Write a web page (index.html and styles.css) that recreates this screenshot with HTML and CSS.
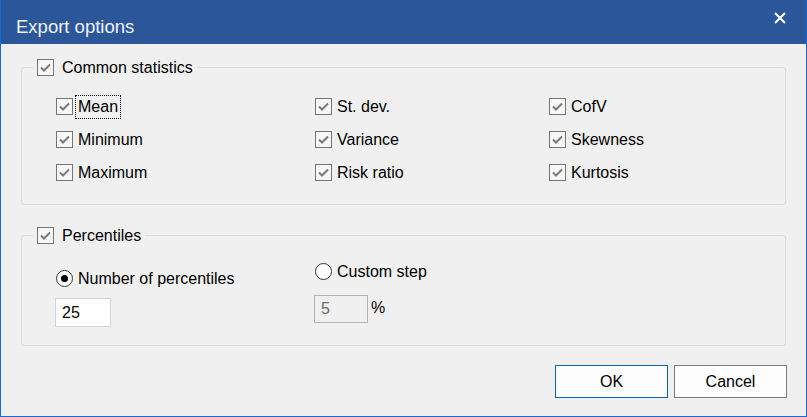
FILE: index.html
```html
<!DOCTYPE html>
<html>
<head>
<meta charset="utf-8">
<link rel="stylesheet" href="styles.css">
</head>
<body>
<div class="window">
  <div class="titlebar">
    <span class="title">Export options</span>
    <svg class="close" width="12" height="12" viewBox="0 0 12 12"><path d="M1 1 L11 11 M11 1 L1 11" stroke="#ffffff" stroke-width="2" fill="none"/></svg>
  </div>
  <div class="content">
    <fieldset class="group group-stats">
      <legend class="legend">
        <span class="cb"><svg viewBox="0 0 15 15"><polyline points="3,7.5 6,10.5 12,4.5"/></svg></span>
        <span class="legend-text">Common statistics</span>
      </legend>
      <div class="grid">
        <div class="item"><span class="cb"><svg viewBox="0 0 15 15"><polyline points="3,7.5 6,10.5 12,4.5"/></svg></span><span class="lbl focus">Mean</span></div>
        <div class="item"><span class="cb"><svg viewBox="0 0 15 15"><polyline points="3,7.5 6,10.5 12,4.5"/></svg></span><span class="lbl">St. dev.</span></div>
        <div class="item"><span class="cb"><svg viewBox="0 0 15 15"><polyline points="3,7.5 6,10.5 12,4.5"/></svg></span><span class="lbl">CofV</span></div>
        <div class="item"><span class="cb"><svg viewBox="0 0 15 15"><polyline points="3,7.5 6,10.5 12,4.5"/></svg></span><span class="lbl">Minimum</span></div>
        <div class="item"><span class="cb"><svg viewBox="0 0 15 15"><polyline points="3,7.5 6,10.5 12,4.5"/></svg></span><span class="lbl">Variance</span></div>
        <div class="item"><span class="cb"><svg viewBox="0 0 15 15"><polyline points="3,7.5 6,10.5 12,4.5"/></svg></span><span class="lbl">Skewness</span></div>
        <div class="item"><span class="cb"><svg viewBox="0 0 15 15"><polyline points="3,7.5 6,10.5 12,4.5"/></svg></span><span class="lbl">Maximum</span></div>
        <div class="item"><span class="cb"><svg viewBox="0 0 15 15"><polyline points="3,7.5 6,10.5 12,4.5"/></svg></span><span class="lbl">Risk ratio</span></div>
        <div class="item"><span class="cb"><svg viewBox="0 0 15 15"><polyline points="3,7.5 6,10.5 12,4.5"/></svg></span><span class="lbl">Kurtosis</span></div>
      </div>
    </fieldset>

    <fieldset class="group group-pct">
      <legend class="legend">
        <span class="cb"><svg viewBox="0 0 15 15"><polyline points="3,7.5 6,10.5 12,4.5"/></svg></span>
        <span class="legend-text">Percentiles</span>
      </legend>
      <div class="pct">
        <div class="col col-count">
          <div class="item radio-row"><span class="rb on"></span><span class="lbl">Number of percentiles</span></div>
          <input class="num" type="text" value="25">
        </div>
        <div class="col col-step">
          <div class="item radio-row"><span class="rb"></span><span class="lbl">Custom step</span></div>
          <div class="step-row">
            <input class="num num-disabled" type="text" value="5" disabled>
            <span class="unit">%</span>
          </div>
        </div>
      </div>
    </fieldset>

    <div class="buttons">
      <button class="btn btn-default">OK</button>
      <button class="btn">Cancel</button>
    </div>
  </div>
</div>
</body>
</html>
```

FILE: styles.css
```css
html, body {
  margin: 0;
  padding: 0;
  background: #f0f0f0;
}

body {
  font-family: "Liberation Sans", Arial, sans-serif;
  font-size: 16px;
  color: #000;
}

.window {
  width: 807px;
  height: 417px;
  box-sizing: border-box;
  border: 1px solid #1a68d0;
  border-top: 0;
  background: #f0f0f0;
  display: flex;
  flex-direction: column;
}

.titlebar {
  height: 44px;
  flex: none;
  background: #2b579a;
  display: flex;
  align-items: center;
  justify-content: space-between;
  padding: 0 20px 0 15px;
}

.title {
  color: #eef2f8;
  font-size: 18.5px;
  margin-top: 10px;
}

.close {
  display: block;
  margin-top: -9px;
}

.content {
  padding: 15px 20px 0 20px;
}

.group {
  margin: 0;
  border: 1px solid #dadada;
  border-radius: 3px;
  min-width: 0;
}

.group-stats {
  padding: 22px 0 23px 11px;
}

.group-pct {
  margin-top: 22px;
  padding: 19px 0 18px 11px;
}

.legend {
  display: flex;
  align-items: center;
  height: 17px;
  padding: 0 4px;
}

.legend-text {
  margin-left: 8px;
  line-height: 17px;
}

.cb {
  width: 17px;
  height: 17px;
  box-sizing: border-box;
  border: 1px solid #767676;
  background: #f7f7f7;
  display: flex;
  align-items: center;
  justify-content: center;
  flex: none;
}

.cb svg {
  width: 15px;
  height: 15px;
  display: block;
}

.cb polyline {
  fill: none;
  stroke: #7a7a7a;
  stroke-width: 2;
}

.grid {
  display: grid;
  grid-template-columns: 259px 234px 1fr;
  row-gap: 16px;
  padding-left: 23px;
}

.item {
  height: 17px;
  display: flex;
  align-items: center;
}

.lbl {
  margin-left: 3px;
  padding: 2px 2px;
  line-height: 18px;
  white-space: nowrap;
}

.lbl.focus {
  outline: 1px dotted #000;
}

.pct {
  display: flex;
  padding-left: 22px;
}

.col-count {
  width: 259px;
  display: flex;
  flex-direction: column;
  align-items: flex-start;
}

.col-count .radio-row {
  margin-top: 7px;
  margin-left: 1px;
}

.col-count .num {
  margin-top: 11px;
  width: 56px;
  height: 29px;
}

.col-step {
  display: flex;
  flex-direction: column;
  align-items: flex-start;
}

.col-step .radio-row {
  margin-left: 1px;
}

.step-row {
  margin-top: 15px;
  display: flex;
  align-items: flex-start;
}

.col-step .num {
  width: 54px;
  height: 28px;
}

.unit {
  margin-left: 3px;
  margin-top: 4px;
  line-height: 18px;
}

.rb {
  width: 17px;
  height: 17px;
  box-sizing: border-box;
  border: 1px solid #333;
  border-radius: 50%;
  background: #fff;
  display: flex;
  align-items: center;
  justify-content: center;
  flex: none;
}

.rb.on::after {
  content: "";
  width: 7px;
  height: 7px;
  border-radius: 50%;
  background: #000;
}

.num {
  box-sizing: border-box;
  margin: 0;
  border: 1px solid #d4d4d4;
  background: #fff;
  padding: 0 0 0 6px;
  font-family: "Liberation Sans", Arial, sans-serif;
  font-size: 16px;
  color: #000;
  outline: none;
}

.num-disabled {
  background: #f0f0f0;
  border-color: #b4b4b4;
  color: #6d6d6d;
}

.buttons {
  display: flex;
  justify-content: flex-end;
  gap: 6px;
  margin-top: 19px;
  margin-right: -1px;
}

.btn {
  width: 113px;
  height: 33px;
  box-sizing: border-box;
  margin: 0;
  background: #fdfdfd;
  border: 1px solid #7a7a7a;
  border-radius: 0;
  font-family: "Liberation Sans", Arial, sans-serif;
  font-size: 16px;
  color: #000;
  padding: 0;
}

.btn-default {
  border-color: #0067c0;
}
```
